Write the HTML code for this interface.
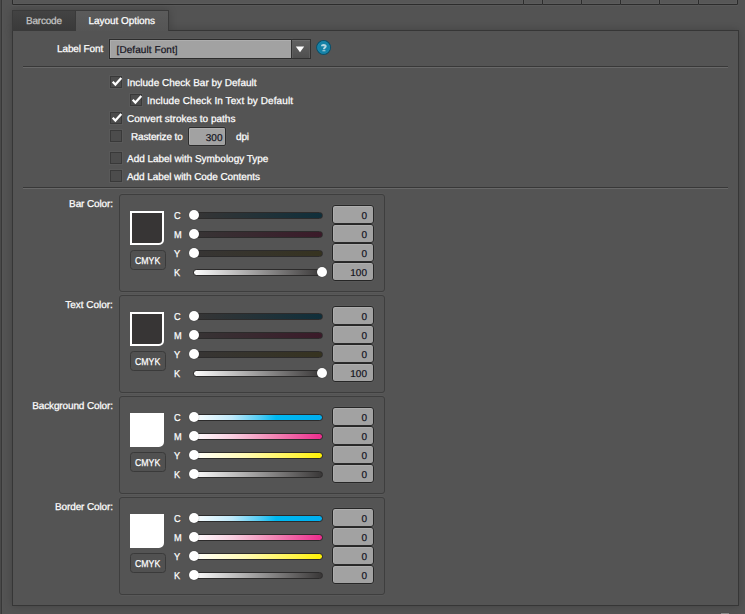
<!DOCTYPE html>
<html><head><meta charset="utf-8"><title>Layout Options</title><style>
*{box-sizing:border-box;margin:0;padding:0}
html,body{width:745px;height:614px;overflow:hidden;background:#535353}
body{position:relative;font-family:"Liberation Sans",sans-serif;font-size:10px;color:#fff;line-height:13px}
.a{position:absolute}
.t{position:absolute;white-space:nowrap;height:13px;line-height:13px;margin-top:1px;text-rendering:geometricPrecision;-webkit-text-stroke:0.25px currentColor}
.d{color:#14141e;-webkit-text-stroke:0.2px #14141e}
.topbox{position:absolute;top:-2px;height:7px;border:1px solid #2c2c2c;border-radius:0 0 1px 1px;background:#575757;box-shadow:inset 0 0 0 1px #5b5b5b}
.panel{position:absolute;left:12px;top:30px;width:727px;height:576px;border:1px solid #363636;background:#545454;box-shadow:0 0 8px rgba(0,0,0,.2)}
.tab1{position:absolute;left:12px;top:10px;width:64px;height:21px;border:1px solid #3a3a3a;border-right:none;background:linear-gradient(#434343,#3a3a3a)}
.tab2{position:absolute;left:75px;top:10px;width:94px;height:21px;border:1px solid #3a3a3a;border-bottom:none;background:linear-gradient(#5b5b5b,#555)}
.sep{position:absolute;left:23px;width:705px;height:2px;border-top:1px solid #383838;background:#686868}
.cb{position:absolute;width:12px;height:12px;border:1px solid #393939;background:#4c4c4c;box-shadow:0 0 0 1px rgba(255,255,255,.03)}
.inp{position:absolute;background:#a2a2a2;border:1px solid #2c2c2c;color:#14141e;box-shadow:inset 1px 1px 0 #aeaeae,0 0 0 1px rgba(255,255,255,.025)}
.grp{position:absolute;left:119px;width:266px;height:98px;border:1px solid #3e3e3e;border-radius:3px;box-shadow:0 1px 0 #595959,0 -1px 0 #585858}
.sw{position:absolute;left:130px;width:34px;height:34px;border:2px solid #fff;border-radius:0 0 5px 0}
.btn{position:absolute;left:130px;width:36px;height:20px;border:1px solid #3a3a3a;border-radius:3.5px;background:#515151}
.trk{position:absolute;left:193px;width:130px;height:7px;border-radius:3.5px;border:1px solid #2c2b2b;background-origin:border-box}
.th{position:absolute;width:10px;height:10px;border-radius:50%;background:#fff;box-shadow:0 0 1px rgba(0,0,0,.5)}
.num{position:absolute;left:332px;width:42px;height:19px;border-radius:3px;background:#a2a2a2;border:1px solid #262626;box-shadow:inset 1px 1px 0 #aeaeae,0 0 0 1px rgba(255,255,255,.025)}
</style></head><body>
<div class="a" style="left:0;top:0;width:1px;height:614px;background:#494949"></div>
<div class="a" style="left:1px;top:0;width:1px;height:614px;background:#383838"></div>
<div class="a" style="left:2px;top:0;width:1px;height:614px;background:#555"></div>
<div class="topbox" style="left:12px;width:512px"></div>
<div class="topbox" style="left:523px;width:20px"></div>
<div class="topbox" style="left:542px;width:40px"></div>
<div class="topbox" style="left:581px;width:40px"></div>
<div class="topbox" style="left:620px;width:40px"></div>
<div class="topbox" style="left:659px;width:40px"></div>
<div class="topbox" style="left:698px;width:40px"></div>
<div class="a" style="left:12px;top:5px;width:726px;height:1px;background:#595959"></div>
<div class="panel"></div>
<div class="a" style="left:12px;top:10px;width:157px;height:22px;box-shadow:0 0 8px rgba(0,0,0,.2)"></div>
<div class="panel" style="box-shadow:none"></div>
<div class="tab1"></div><div class="tab2"></div>
<div class="t" style="left:26px;top:14px;letter-spacing:-0.2px;color:#c4c4c4">Barcode</div>
<div class="t" style="left:88.5px;top:14px;letter-spacing:-0.05px">Layout Options</div>
<div class="t" style="left:57px;top:42px;letter-spacing:-0.11px">Label Font</div>
<div class="inp" style="left:109px;top:39px;width:183px;height:20px"></div>
<div class="t d" style="left:116.6px;top:43px;letter-spacing:0.07px">[Default Font]</div>
<div class="a" style="left:291px;top:39px;width:20px;height:20px;border:1px solid #313131;background:linear-gradient(#626262,#4f4f4f);box-shadow:inset 0 1px 0 #6c6c6c,inset 1px 0 0 #5e5e5e,inset -1px 0 0 #5e5e5e"></div>
<svg class="a" style="left:295px;top:45px" width="10" height="9" viewBox="0 0 10 9"><path d="M0.8 1.5 L9.2 1.5 L5 7.3 Z" fill="#fff"/></svg>
<svg class="a" style="left:315px;top:39px" width="17" height="17" viewBox="0 0 17 17"><circle cx="8.6" cy="8.45" r="6.9" fill="#1481a6" stroke="#0b4f69" stroke-width="1.1"/><circle cx="8.6" cy="8.45" r="5.9" fill="none" stroke="#1a88ad" stroke-width="0.8"/><path d="M7.0 7.2 C7.0 5.8 10.7 5.6 10.7 7.3 C10.7 8.5 9.0 8.6 8.9 10.2" fill="none" stroke="#b5d5e0" stroke-width="2"/><rect x="7.4" y="11.15" width="3.1" height="1.1" rx="0.3" fill="#b5d5e0"/></svg>
<div class="sep" style="top:66px"></div>
<div class="sep" style="top:187px"></div>
<div class="cb" style="left:110px;top:76px"><svg width="12" height="11" viewBox="0 0 12 11" style="position:absolute;left:0;top:0;overflow:visible"><path d="M1.7 4.7 L4.4 7.6 L10.3 1.0" fill="none" stroke="#fff" stroke-width="2.2"/></svg></div>
<div class="t" style="left:127px;top:76px">Include Check Bar by Default</div>
<div class="cb" style="left:130px;top:94px"><svg width="12" height="11" viewBox="0 0 12 11" style="position:absolute;left:0;top:0;overflow:visible"><path d="M1.7 4.7 L4.4 7.6 L10.3 1.0" fill="none" stroke="#fff" stroke-width="2.2"/></svg></div>
<div class="t" style="left:147px;top:94px;letter-spacing:0.09px">Include Check In Text by Default</div>
<div class="cb" style="left:110px;top:112px"><svg width="12" height="11" viewBox="0 0 12 11" style="position:absolute;left:0;top:0;overflow:visible"><path d="M1.7 4.7 L4.4 7.6 L10.3 1.0" fill="none" stroke="#fff" stroke-width="2.2"/></svg></div>
<div class="t" style="left:127px;top:112px">Convert strokes to paths</div>
<div class="cb" style="left:110px;top:130px"></div>
<div class="t" style="left:131px;top:130px;letter-spacing:-0.15px">Rasterize to</div>
<div class="cb" style="left:110px;top:152px"></div>
<div class="t" style="left:127px;top:152px;letter-spacing:-0.03px">Add Label with Symbology Type</div>
<div class="cb" style="left:110px;top:170px"></div>
<div class="t" style="left:127px;top:170px;letter-spacing:-0.08px">Add Label with Code Contents</div>
<div class="inp" style="left:188px;top:127px;width:38px;height:19px;border-radius:2px"></div>
<div class="t d" style="right:522.5px;top:131px">300</div>
<div class="t" style="left:236px;top:130px;letter-spacing:-0.15px">dpi</div>
<div class="grp" style="top:194px"></div>
<div class="t" style="right:632.2px;top:197px;letter-spacing:-0.13px">Bar Color:</div>
<div class="sw" style="top:211px;background:#373535"></div>
<div class="btn" style="top:250px"></div>
<div class="t" style="left:135.3px;top:254px;transform:scale(0.875,1);transform-origin:0 10px">CMYK</div>
<div class="t" style="left:174px;top:209px;transform:scale(0.92,1);transform-origin:0 10px">C</div>
<div class="trk" style="top:212px;background-image:linear-gradient(90deg,#373535,#0f2f3b)"></div>
<div class="th" style="left:189px;top:210px"></div>
<div class="num" style="top:205px"></div>
<div class="t d" style="right:378px;top:209px">0</div>
<div class="t" style="left:174px;top:228px;transform:scale(0.92,1);transform-origin:0 10px">M</div>
<div class="trk" style="top:231px;background-image:linear-gradient(90deg,#373535,#3b1a29)"></div>
<div class="th" style="left:189px;top:229px"></div>
<div class="num" style="top:224px"></div>
<div class="t d" style="right:378px;top:228px">0</div>
<div class="t" style="left:174px;top:247px;transform:scale(0.92,1);transform-origin:0 10px">Y</div>
<div class="trk" style="top:250px;background-image:linear-gradient(90deg,#373535,#363320)"></div>
<div class="th" style="left:189px;top:248px"></div>
<div class="num" style="top:243px"></div>
<div class="t d" style="right:378px;top:247px">0</div>
<div class="t" style="left:174px;top:266px;transform:scale(0.92,1);transform-origin:0 10px">K</div>
<div class="trk" style="top:269px;background-image:linear-gradient(90deg,#fff,#373535)"></div>
<div class="th" style="left:317px;top:267px"></div>
<div class="num" style="top:262px"></div>
<div class="t d" style="right:378px;top:266px">100</div>
<div class="grp" style="top:295px"></div>
<div class="t" style="right:632.2px;top:298px;letter-spacing:-0.03px">Text Color:</div>
<div class="sw" style="top:312px;background:#373535"></div>
<div class="btn" style="top:351px"></div>
<div class="t" style="left:135.3px;top:355px;transform:scale(0.875,1);transform-origin:0 10px">CMYK</div>
<div class="t" style="left:174px;top:310px;transform:scale(0.92,1);transform-origin:0 10px">C</div>
<div class="trk" style="top:313px;background-image:linear-gradient(90deg,#373535,#0f2f3b)"></div>
<div class="th" style="left:189px;top:311px"></div>
<div class="num" style="top:306px"></div>
<div class="t d" style="right:378px;top:310px">0</div>
<div class="t" style="left:174px;top:329px;transform:scale(0.92,1);transform-origin:0 10px">M</div>
<div class="trk" style="top:332px;background-image:linear-gradient(90deg,#373535,#3b1a29)"></div>
<div class="th" style="left:189px;top:330px"></div>
<div class="num" style="top:325px"></div>
<div class="t d" style="right:378px;top:329px">0</div>
<div class="t" style="left:174px;top:348px;transform:scale(0.92,1);transform-origin:0 10px">Y</div>
<div class="trk" style="top:351px;background-image:linear-gradient(90deg,#373535,#363320)"></div>
<div class="th" style="left:189px;top:349px"></div>
<div class="num" style="top:344px"></div>
<div class="t d" style="right:378px;top:348px">0</div>
<div class="t" style="left:174px;top:367px;transform:scale(0.92,1);transform-origin:0 10px">K</div>
<div class="trk" style="top:370px;background-image:linear-gradient(90deg,#fff,#373535)"></div>
<div class="th" style="left:317px;top:368px"></div>
<div class="num" style="top:363px"></div>
<div class="t d" style="right:378px;top:367px">100</div>
<div class="grp" style="top:396px"></div>
<div class="t" style="right:632.2px;top:399px;letter-spacing:-0.13px">Background Color:</div>
<div class="sw" style="top:413px;background:#fff"></div>
<div class="btn" style="top:452px"></div>
<div class="t" style="left:135.3px;top:456px;transform:scale(0.875,1);transform-origin:0 10px">CMYK</div>
<div class="t" style="left:174px;top:411px;transform:scale(0.92,1);transform-origin:0 10px">C</div>
<div class="trk" style="top:414px;background-image:linear-gradient(90deg,#fff 0%,#bfe9fa 30%,#4fcbf4 52%,#00b9f1 64%,#00aeef 100%)"></div>
<div class="th" style="left:189px;top:412px"></div>
<div class="num" style="top:407px"></div>
<div class="t d" style="right:378px;top:411px">0</div>
<div class="t" style="left:174px;top:430px;transform:scale(0.92,1);transform-origin:0 10px">M</div>
<div class="trk" style="top:433px;background-image:linear-gradient(90deg,#fff 0%,#f9cfe0 30%,#f287b5 62%,#ec2a8c 100%)"></div>
<div class="th" style="left:189px;top:431px"></div>
<div class="num" style="top:426px"></div>
<div class="t d" style="right:378px;top:430px">0</div>
<div class="t" style="left:174px;top:449px;transform:scale(0.92,1);transform-origin:0 10px">Y</div>
<div class="trk" style="top:452px;background-image:linear-gradient(90deg,#fff 0%,#fffab4 40%,#fff445 80%,#fff100 100%)"></div>
<div class="th" style="left:189px;top:450px"></div>
<div class="num" style="top:445px"></div>
<div class="t d" style="right:378px;top:449px">0</div>
<div class="t" style="left:174px;top:468px;transform:scale(0.92,1);transform-origin:0 10px">K</div>
<div class="trk" style="top:471px;background-image:linear-gradient(90deg,#fff,#373535)"></div>
<div class="th" style="left:189px;top:469px"></div>
<div class="num" style="top:464px"></div>
<div class="t d" style="right:378px;top:468px">0</div>
<div class="grp" style="top:497px"></div>
<div class="t" style="right:632.2px;top:500px;letter-spacing:-0.13px">Border Color:</div>
<div class="sw" style="top:514px;background:#fff"></div>
<div class="btn" style="top:553px"></div>
<div class="t" style="left:135.3px;top:557px;transform:scale(0.875,1);transform-origin:0 10px">CMYK</div>
<div class="t" style="left:174px;top:512px;transform:scale(0.92,1);transform-origin:0 10px">C</div>
<div class="trk" style="top:515px;background-image:linear-gradient(90deg,#fff 0%,#bfe9fa 30%,#4fcbf4 52%,#00b9f1 64%,#00aeef 100%)"></div>
<div class="th" style="left:189px;top:513px"></div>
<div class="num" style="top:508px"></div>
<div class="t d" style="right:378px;top:512px">0</div>
<div class="t" style="left:174px;top:531px;transform:scale(0.92,1);transform-origin:0 10px">M</div>
<div class="trk" style="top:534px;background-image:linear-gradient(90deg,#fff 0%,#f9cfe0 30%,#f287b5 62%,#ec2a8c 100%)"></div>
<div class="th" style="left:189px;top:532px"></div>
<div class="num" style="top:527px"></div>
<div class="t d" style="right:378px;top:531px">0</div>
<div class="t" style="left:174px;top:550px;transform:scale(0.92,1);transform-origin:0 10px">Y</div>
<div class="trk" style="top:553px;background-image:linear-gradient(90deg,#fff 0%,#fffab4 40%,#fff445 80%,#fff100 100%)"></div>
<div class="th" style="left:189px;top:551px"></div>
<div class="num" style="top:546px"></div>
<div class="t d" style="right:378px;top:550px">0</div>
<div class="t" style="left:174px;top:569px;transform:scale(0.92,1);transform-origin:0 10px">K</div>
<div class="trk" style="top:572px;background-image:linear-gradient(90deg,#fff,#373535)"></div>
<div class="th" style="left:189px;top:570px"></div>
<div class="num" style="top:565px"></div>
<div class="t d" style="right:378px;top:569px">0</div>
<div class="a" style="left:721px;top:613px;width:8px;height:1px;background:#8a8a8a"></div>
<div class="a" style="left:720px;top:612px;width:10px;height:1px;background:#4e4e4e"></div>
</body></html>
